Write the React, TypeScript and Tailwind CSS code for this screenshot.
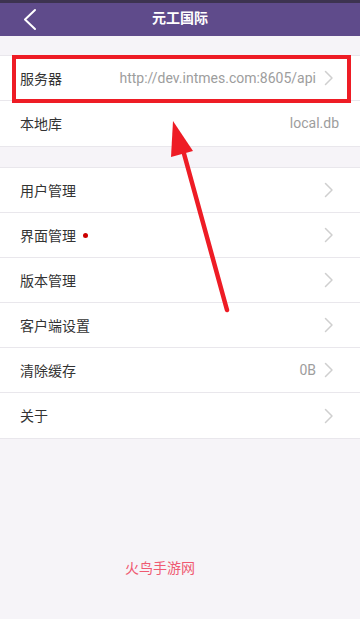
import React from "react";

const Chevron = () => (
  <svg width="10" height="16" viewBox="0 0 10 16" className="ml-[8px] shrink-0">
    <polyline points="1.5,1.5 8,8 1.5,14.5" fill="none" stroke="#cfcfcf" strokeWidth="1.5" strokeLinecap="round" strokeLinejoin="round" />
  </svg>
);

type RowProps = { label: string; value?: string; chevron?: boolean; dot?: boolean; last?: boolean };

const Row = ({ label, value, chevron = true, dot, last }: RowProps) => (
  <div className={`h-[45px] flex items-center pl-[20px] ${chevron ? "pr-[26px]" : "pr-[21px]"} ${last ? "" : "border-b border-[#e9e7ec]"}`}>
    <span className="text-[14px] text-[#333333]">{label}</span>
    {dot && <span className="ml-[7px] w-[5px] h-[5px] rounded-full bg-[#cc0000]" />}
    <div className="flex-1" />
    {value && <span className="text-[14px] text-[#9d9d9d] font-['Roboto','Noto_Sans_CJK_SC',sans-serif]">{value}</span>}
    {chevron && <Chevron />}
  </div>
);

export default function App() {
  return (
    <div className="relative w-[360px] h-[619px] overflow-hidden bg-[#f6f4f8] font-['Noto_Sans_CJK_SC','Noto_Sans',sans-serif] flex flex-col">
      <div className="h-[3px] bg-[#3d3350]" />
      <div className="relative h-[33px] bg-[#5f4b8b] flex items-center justify-center">
        <svg width="16" height="24" viewBox="0 0 16 24" className="absolute left-[22px] top-[5px]">
          <polyline points="13,2 3,11.5 13,21" fill="none" stroke="#ffffff" strokeWidth="2" strokeLinecap="round" strokeLinejoin="round" />
        </svg>
        <span className="text-white text-[14px] font-bold -mt-[5px]">元工国际</span>
      </div>

      <div className="mt-[19px] bg-white border-y border-[#e9e7ec]">
        <Row label="服务器" value="http://dev.intmes.com:8605/api" />
        <Row label="本地库" value="local.db" chevron={false} last />
      </div>

      <div className="mt-[20px] bg-white border-y border-[#e9e7ec]">
        <Row label="用户管理" />
        <Row label="界面管理" dot />
        <Row label="版本管理" />
        <Row label="客户端设置" />
        <Row label="清除缓存" value="0B" />
        <Row label="关于" last />
      </div>

      <div className="flex-1 flex items-start justify-center pt-[118px] pr-[40px]">
        <span className="text-[14px] text-[#ef5a72]">火鸟手游网</span>
      </div>

      <div className="absolute left-[12px] top-[55px] w-[339px] h-[48px] border-[4px] border-[#ee1c25]" />

      <svg className="absolute left-0 top-0 pointer-events-none" width="360" height="619" viewBox="0 0 360 619">
        <line x1="227" y1="310" x2="183" y2="150" stroke="#ee1c25" strokeWidth="4.5" strokeLinecap="round" />
        <polygon points="173,121 171,157 193,151" fill="#ee1c25" />
      </svg>
    </div>
  );
}
